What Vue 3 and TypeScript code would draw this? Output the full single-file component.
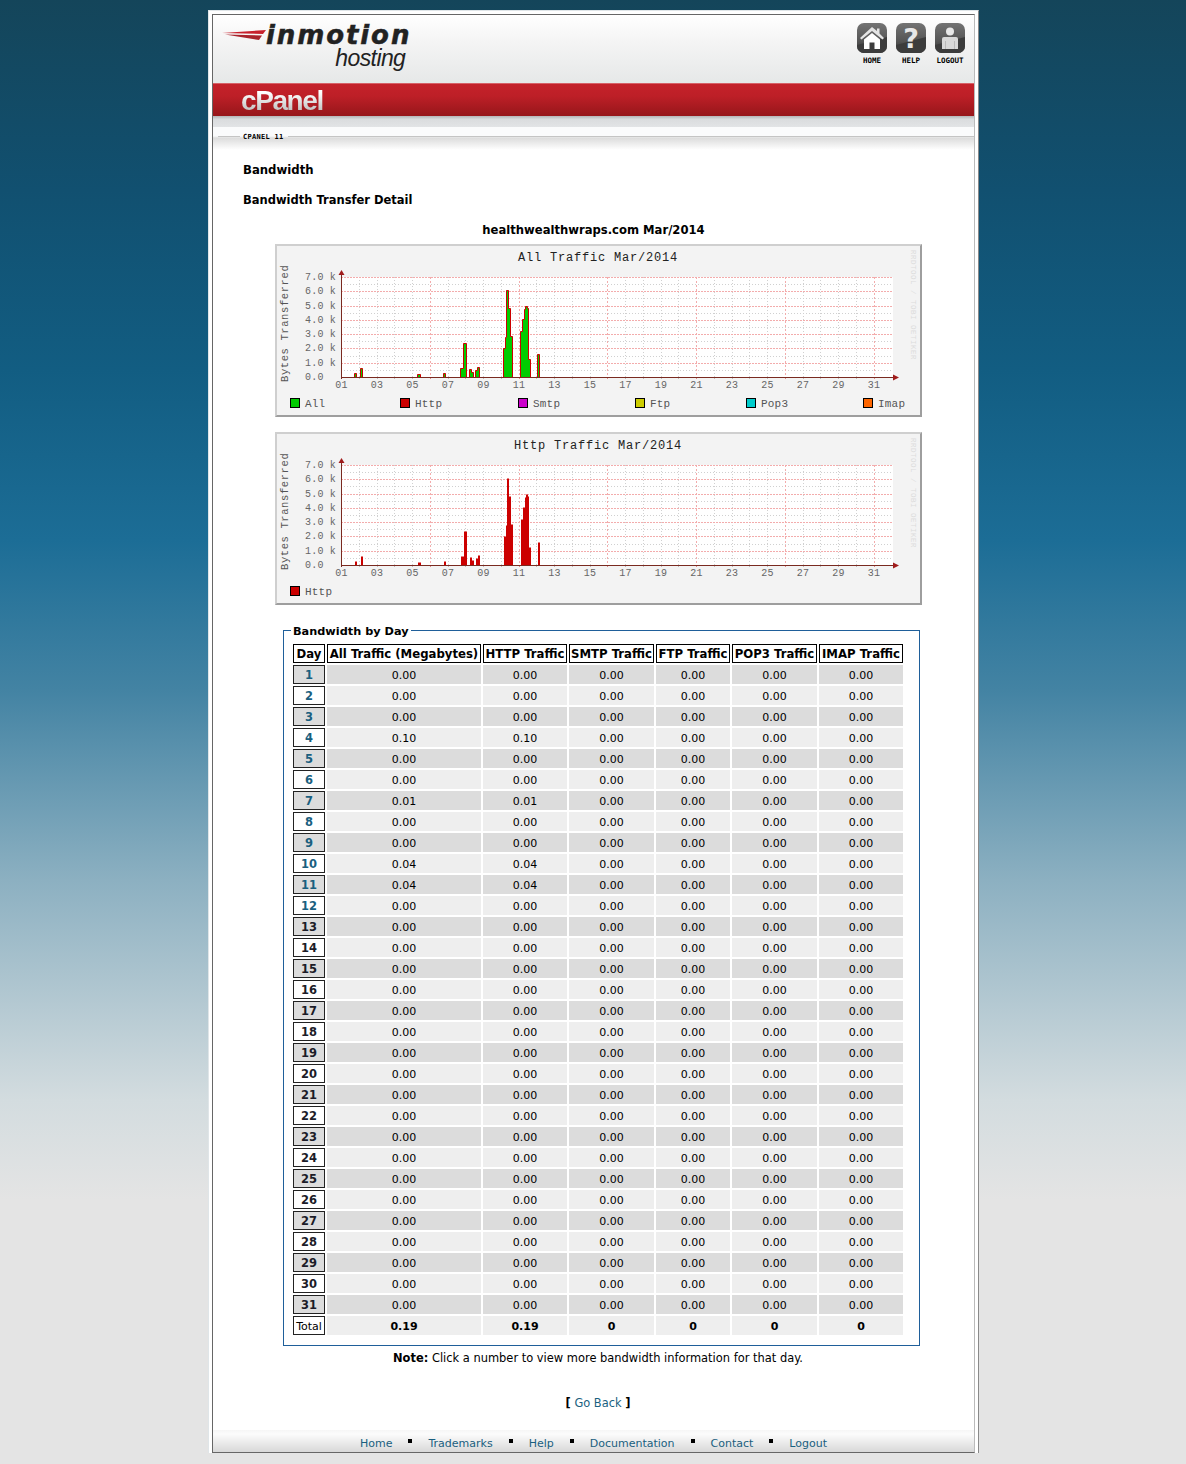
<script setup lang="ts">
interface Bar { x0: number; x1: number; h: number }

// stepped traffic samples read off the rrdtool graph, in plot pixels
const groups: Bar[][] = [
  [{ x0: 13, x1: 15, h: 4 }],
  [{ x0: 19, x1: 21, h: 9 }],
  [{ x0: 76, x1: 79, h: 3 }],
  [{ x0: 102, x1: 104, h: 4 }],
  [{ x0: 119, x1: 122, h: 9 }, { x0: 122, x1: 125, h: 34 }],
  [{ x0: 128, x1: 130, h: 8 }, { x0: 130, x1: 132, h: 5 }],
  [{ x0: 134, x1: 136, h: 7 }, { x0: 136, x1: 138, h: 10 }],
  [
    { x0: 162, x1: 164, h: 29 },
    { x0: 164, x1: 165, h: 40 },
    { x0: 165, x1: 167, h: 87 },
    { x0: 167, x1: 169, h: 69 },
    { x0: 169, x1: 171, h: 41 },
  ],
  [
    { x0: 179, x1: 181, h: 46 },
    { x0: 181, x1: 183, h: 58 },
    { x0: 183, x1: 184, h: 68 },
    { x0: 184, x1: 186, h: 71 },
    { x0: 186, x1: 187, h: 69 },
    { x0: 187, x1: 189, h: 18 },
  ],
  [{ x0: 196, x1: 198, h: 23 }],
]

const PLOT_X = 64
const DAY = 17.75

function stepPath(g: Bar[], base: number): string {
  const ox = PLOT_X + 0.5
  const by = base + 0.5
  let d = `M${ox + g[0].x0} ${by}`
  for (const b of g) {
    d += `L${ox + b.x0} ${by - b.h}L${ox + b.x1} ${by - b.h}`
  }
  d += `L${ox + g[g.length - 1].x1} ${by}Z`
  return d
}

const days = Array.from({ length: 31 }, (_, i) => i + 1)
const hGrid = Array.from({ length: 14 }, (_, i) => i + 1)
const yLabels = [0, 1, 2, 3, 4, 5, 6, 7]
const xLabels = days.filter((d) => d % 2 === 1)
const minorV = days.filter((d) => d % 5 !== 1)
const majorV = days.filter((d) => d % 5 === 1)
const minorH = hGrid.filter((i) => i % 2 === 1)
const majorH = hGrid.filter((i) => i % 2 === 0)

const vx = (d: number) => Math.round(PLOT_X + (d - 1) * DAY) + 0.5
const hy = (base: number, i: number) => Math.round(base - i * 7.15) + 0.5

const charts = [
  {
    title: 'All Traffic Mar/2014',
    base: 131,
    style: 'all',
    legend: [
      { name: 'All', x: 13, color: '#00cc00' },
      { name: 'Http', x: 123, color: '#cc0000' },
      { name: 'Smtp', x: 241, color: '#cc00cc' },
      { name: 'Ftp', x: 358, color: '#cccc00' },
      { name: 'Pop3', x: 469, color: '#00cccc' },
      { name: 'Imap', x: 586, color: '#ff6600' },
    ],
  },
  {
    title: 'Http Traffic Mar/2014',
    base: 131,
    style: 'http',
    legend: [{ name: 'Http', x: 13, color: '#cc0000' }],
  },
]

const specials: Record<number, string> = { 4: '0.10', 7: '0.01', 10: '0.04', 11: '0.04' }
const rows = days.map((d) => {
  const v = specials[d] ?? '0.00'
  return { day: d, all: v, http: v }
})

const columns = ['All Traffic (Megabytes)', 'HTTP Traffic', 'SMTP Traffic', 'FTP Traffic', 'POP3 Traffic', 'IMAP Traffic']
const footerLinks = ['Home', 'Trademarks', 'Help', 'Documentation', 'Contact', 'Logout']
</script>

<template>
  <div class="frame">
    <div class="inner">
      <header class="top">
        <div class="logo">
          <svg class="swoosh" width="46" height="16" viewBox="0 0 46 16">
            <polygon points="0,5 44,2 41,6" fill="#c8202c" />
            <polygon points="3,6.500 40,7.500 37,12" fill="#a8242c" />
          </svg>
          <div class="logo-words">
            <span class="logo-main">inmotion</span>
            <span class="logo-sub">hosting</span>
          </div>
        </div>
        <nav class="icons">
          <a class="icon">
            <svg width="30" height="30" viewBox="0 0 30 30">
              <defs>
                <linearGradient id="btn" x1="0" y1="0" x2="0" y2="1">
                  <stop offset="0" stop-color="#747474" />
                  <stop offset="0.6" stop-color="#555" />
                  <stop offset="1" stop-color="#333" />
                </linearGradient>
              </defs>
              <rect width="30" height="30" rx="7" fill="url(#btn)" />
              <path d="M30 14V23a7 7 0 0 1-7 7H7a7 7 0 0 1-7-7V22Z" fill="#3c3c3c" />
              <path d="M15 4L20 8V5.500h2.500V10.500L27 15l-1.500 1.500L15 8 4.500 16.500 3 15Z" fill="#e4e4e4" />
              <path d="M7 16.500L15 10l8 6.500V26H17.500V19.500h-5V26H7Z" fill="#fff" />
            </svg>
            <span>HOME</span>
          </a>
          <a class="icon">
            <svg width="30" height="30" viewBox="0 0 30 30">
              <rect width="30" height="30" rx="7" fill="url(#btn)" />
              <path d="M30 14V23a7 7 0 0 1-7 7H7a7 7 0 0 1-7-7V22Z" fill="#3c3c3c" />
              <text x="15" y="25" text-anchor="middle" class="qmark">?</text>
            </svg>
            <span>HELP</span>
          </a>
          <a class="icon">
            <svg width="30" height="30" viewBox="0 0 30 30">
              <rect width="30" height="30" rx="7" fill="url(#btn)" />
              <path d="M30 14V23a7 7 0 0 1-7 7H7a7 7 0 0 1-7-7V22Z" fill="#3c3c3c" />
              <circle cx="15" cy="8.500" r="4" fill="#e8e8e8" />
              <path d="M9 14h12a2 2 0 0 1 2 2V26H7V16a2 2 0 0 1 2-2Z" fill="#d8d8d8" />
              <path d="M10.500 18V26M19.500 18V26" stroke="#aaa" stroke-width="0.7" />
            </svg>
            <span>LOGOUT</span>
          </a>
        </nav>
      </header>

      <div class="brand"><span class="brand-text">cPanel</span></div>
      <div class="brand-shadow"></div>
      <div class="crumb"><span>CPANEL 11</span></div>

      <main class="content">
        <h1 class="title">Bandwidth</h1>
        <h2 class="subtitle">Bandwidth Transfer Detail</h2>
        <h3 class="domain">healthwealthwraps.com Mar/2014</h3>

        <div v-for="c in charts" :key="c.title" class="chart">
          <svg width="643" height="169" viewBox="0 0 643 169">
            <text x="321" y="15" text-anchor="middle" class="g-title">{{ c.title }}</text>
            <text transform="translate(11 136) rotate(-90)" class="g-axis-title">Bytes Transferred</text>
            <text transform="translate(634 4) rotate(90)" class="g-mark">RRDTOOL / TOBI OETIKER</text>

            <rect :x="PLOT_X" :y="c.base - 100" width="552" height="100" fill="#fff" />
            <g stroke="#d0d0d0" stroke-dasharray="1 2">
              <line v-for="i in minorH" :key="'h' + i" :x1="PLOT_X" :x2="PLOT_X + 552" :y1="hy(c.base, i)" :y2="hy(c.base, i)" />
              <line v-for="d in minorV" :key="'v' + d" :x1="vx(d)" :x2="vx(d)" :y1="c.base - 100" :y2="c.base" />
            </g>
            <g stroke="#f3acac">
              <line v-for="i in majorH" :key="'h' + i" stroke-dasharray="2 1" :x1="PLOT_X" :x2="PLOT_X + 552" :y1="hy(c.base, i)" :y2="hy(c.base, i)" />
              <line v-for="d in majorV" :key="'v' + d" stroke-dasharray="2 2" :x1="vx(d)" :x2="vx(d)" :y1="c.base - 100" :y2="c.base" />
            </g>
            <line v-for="d in days" :key="'t' + d" :x1="vx(d)" :x2="vx(d)" :y1="c.base" :y2="c.base + 2"
              :stroke="d % 5 === 1 ? '#d88' : '#bbb'" />

            <template v-for="(g, gi) in groups" :key="gi">
              <path v-if="c.style === 'all'" :d="stepPath(g, c.base)" fill="#00cc00" stroke="#cc0000" />
              <path v-else :d="stepPath(g, c.base)" fill="#cc0000" transform="translate(0.500 0)" />
            </template>

            <line :x1="PLOT_X" :x2="PLOT_X + 552" :y1="c.base + 0.5" :y2="c.base + 0.5" stroke="#7a2a20" />
            <line :x1="PLOT_X + 0.5" :x2="PLOT_X + 0.5" :y1="c.base - 104" :y2="c.base + 2" stroke="#7a2a20" />
            <polygon :points="`${PLOT_X + 0.500},${c.base - 107} ${PLOT_X + 3.500},${c.base - 102} ${PLOT_X - 2.500},${c.base - 102}`" fill="#a01c1c" />
            <polygon :points="`${PLOT_X + 558},${c.base + 0.500} ${PLOT_X + 552},${c.base - 2.500} ${PLOT_X + 552},${c.base + 3.500}`" fill="#a01c1c" />

            <text v-for="n in yLabels" :key="'y' + n" x="28" :y="c.base + 3 - n * 14.3" class="g-label">{{ n }}.0 {{ n === 0 ? ' ' : 'k' }}</text>
            <text v-for="d in xLabels" :key="'x' + d" :x="PLOT_X + 0.500 + (d - 1) * DAY" :y="c.base + 11" text-anchor="middle" class="g-label">{{ String(d).padStart(2, '0') }}</text>

            <template v-for="l in c.legend" :key="l.name">
              <rect :x="l.x + 0.5" y="152.500" width="9" height="9" :fill="l.color" stroke="#000" />
              <text :x="l.x + 15" y="161" class="g-legend">{{ l.name }}</text>
            </template>
          </svg>
        </div>

        <fieldset class="box">
          <legend>Bandwidth by Day</legend>
          <table class="data">
            <colgroup>
              <col class="c-day" /><col class="c-all" /><col class="c-std" /><col class="c-smtp" />
              <col class="c-ftp" /><col class="c-smtp" /><col class="c-std" />
            </colgroup>
            <thead>
              <tr>
                <th>Day</th>
                <th v-for="col in columns" :key="col">{{ col }}</th>
              </tr>
            </thead>
            <tbody>
              <tr v-for="r in rows" :key="r.day" :class="r.day % 2 ? 'odd' : 'even'">
                <td class="day" :class="{ visited: r.day > 12 }"><a>{{ r.day }}</a></td>
                <td>{{ r.all }}</td>
                <td>{{ r.http }}</td>
                <td>0.00</td>
                <td>0.00</td>
                <td>0.00</td>
                <td>0.00</td>
              </tr>
              <tr class="even total">
                <td class="day">Total</td>
                <td>0.19</td>
                <td>0.19</td>
                <td>0</td>
                <td>0</td>
                <td>0</td>
                <td>0</td>
              </tr>
            </tbody>
          </table>
        </fieldset>

        <p class="note"><b>Note:</b> Click a number to view more bandwidth information for that day.</p>
        <p class="back"><b>[</b> <a>Go Back</a> <b>]</b></p>
      </main>

      <footer class="foot">
        <template v-for="(l, i) in footerLinks" :key="l">
          <i v-if="i > 0" class="dot"></i>
          <a>{{ l }}</a>
        </template>
      </footer>
    </div>
  </div>
</template>

<style>
html, body {
  margin: 0;
}
body {
  min-height: 1464px;
  background: linear-gradient(180deg, #14455a 0, #115070 190px, #125d82 370px, #1c6d96 540px, #4383a3 690px, #8cb0c1 880px, #d3dcdf 1100px, #e4e4e4 1200px, #e4e4e4 100%);
}
</style>

<style scoped>
.frame {
  box-sizing: border-box;
  width: 771px;
  height: 1443px;
  margin: 10px 0 0 208px;
  padding: 3px 3px 0;
  background: #fff;
  border: 1px solid #dfe5e8;
  border-right-color: #8a8a8a;
  border-bottom: 0;
  font-family: "DejaVu Sans", Verdana, sans-serif;
  font-size: 11px;
  color: #000;
}
.inner {
  box-sizing: border-box;
  height: 1439px;
  border: 1px solid #666;
  border-right-color: #bbb;
  border-bottom-color: #666;
  display: flex;
  flex-direction: column;
  background: #fff;
}
.top {
  height: 68px;
  flex: none;
  display: flex;
  justify-content: space-between;
  background: linear-gradient(180deg, #fff 0, #f4f4f4 40%, #e6e8e8 100%);
}
.logo {
  display: flex;
  margin: 8px 0 0 9px;
  align-items: flex-start;
}
.swoosh {
  margin-top: 5px;
  margin-right: -2px;
}
.logo-words {
  display: flex;
  flex-direction: column;
  align-items: flex-end;
}
.logo-main {
  font-family: "DejaVu Sans", sans-serif;
  font-weight: 700;
  font-style: italic;
  font-size: 26px;
  line-height: 25px;
  letter-spacing: 1.9px;
  -webkit-text-stroke: 0.5px #222;
  color: #222;
}
.logo-sub {
  font-family: "Liberation Sans", sans-serif;
  font-style: italic;
  font-size: 23px;
  line-height: 21px;
  letter-spacing: -0.6px;
  color: #222;
  margin-right: 6px;
}
.icons {
  display: flex;
  gap: 9px;
  margin: 8px 9px 0 0;
}
.icon {
  display: flex;
  flex-direction: column;
  align-items: center;
  width: 30px;
  font-family: "DejaVu Sans Mono", monospace;
  font-weight: 700;
  font-size: 7.500px;
  line-height: 8px;
  color: #000;
}
.icon span {
  margin-top: 4px;
  white-space: nowrap;
}
.qmark {
  font-family: "DejaVu Sans", sans-serif;
  font-weight: 700;
  font-size: 27px;
  fill: #e8e8e8;
}
.brand {
  height: 33px;
  flex: none;
  box-sizing: border-box;
  padding: 2px 0 0 28px;
  background: linear-gradient(180deg, #e9a0a3 0, #c4212a 1px, #bd1f27 40%, #96161a 100%);
  display: flex;
  align-items: center;
}
.brand-text {
  font-family: "Liberation Sans", sans-serif;
  font-weight: 700;
  font-size: 28px;
  letter-spacing: -1.4px;
  line-height: 31px;
  background: linear-gradient(180deg, #fff 25%, #c4c4c4 80%);
  -webkit-background-clip: text;
  background-clip: text;
  color: transparent;
}
.brand-shadow {
  height: 11px;
  flex: none;
  background: linear-gradient(180deg, #b4b6b8 0, #dadcde 30%, #e2e4e6 100%);
}
.crumb {
  height: 23px;
  flex: none;
  box-sizing: border-box;
  position: relative;
  background: linear-gradient(180deg, #fafbfc 0, #fafbfc 9px, #dcdcdc 11px, #fff 100%);
  font-family: "DejaVu Sans Mono", monospace;
  font-weight: 700;
  font-size: 7px;
  letter-spacing: 0.3px;
}
.crumb::before {
  content: "";
  position: absolute;
  left: 5px;
  right: 0;
  top: 9px;
  border-top: 1px solid #c4c4c4;
}
.crumb span {
  position: absolute;
  left: 27px;
  top: 6px;
  padding: 0 4px 0 3px;
  line-height: 9px;
  background: linear-gradient(180deg, #fafbfc 0, #fafbfc 3px, #dcdcdc 5px, #e6e6e6 100%);
}
.content {
  flex: 1;
  padding: 10px 0 0;
  display: flex;
  flex-direction: column;
}
.title {
  margin: 0 0 0 30px;
  font-size: 11.700px;
  line-height: 20px;
  font-weight: 700;
}
.subtitle {
  margin: 10px 0 0 30px;
  font-size: 11.500px;
  line-height: 20px;
  font-weight: 700;
}
.domain {
  margin: 10px 0 4px;
  font-size: 11.600px;
  line-height: 20px;
  font-weight: 700;
  text-align: center;
}
.chart {
  box-sizing: border-box;
  width: 647px;
  height: 173px;
  margin: 0 0 15px 62px;
  background: #f3f3f3;
  border: 2px solid #cfcfcf;
  border-right-color: #9e9e9e;
  border-bottom-color: #9e9e9e;
}
.chart svg {
  display: block;
}
.g-title {
  font-family: "Liberation Mono", monospace;
  font-size: 12px;
  letter-spacing: 0.8px;
  fill: #222;
}
.g-axis-title {
  font-family: "Liberation Mono", monospace;
  font-size: 10.500px;
  letter-spacing: 0.6px;
  fill: #555;
}
.g-mark {
  font-family: "Liberation Mono", monospace;
  font-size: 7.500px;
  letter-spacing: 0.5px;
  fill: #dcdcdc;
}
.g-label {
  font-family: "Liberation Mono", monospace;
  font-size: 10px;
  letter-spacing: 0.2px;
  fill: #666;
}
.g-legend {
  font-family: "Liberation Mono", monospace;
  font-size: 11px;
  letter-spacing: 0.2px;
  fill: #555;
}
.box {
  box-sizing: border-box;
  width: 637px;
  height: 724px;
  margin: 2px 0 0 70px;
  padding: 4px 9px 0;
  border: 1px solid #1f5f9a;
  min-width: 0;
}
.box legend {
  position: relative;
  top: 2px;
  padding: 0 2px;
  margin-left: -2px;
  font-weight: 700;
  font-size: 11.300px;
  line-height: 16px;
}
.data {
  border-collapse: separate;
  border-spacing: 2px;
  table-layout: fixed;
  width: 614px;
  margin-left: -2px;
  text-align: center;
}
.c-day { width: 32px; }
.c-all { width: 154px; }
.c-std { width: 84px; }
.c-smtp { width: 85px; }
.c-ftp { width: 74px; }
.data th {
  box-sizing: border-box;
  height: 19px;
  padding: 1px 0 0;
  border: 1px solid #000;
  font-size: 11.700px;
  font-weight: 700;
  white-space: nowrap;
  background: #fff;
}
.data td {
  box-sizing: border-box;
  height: 19px;
  padding: 1px 0 0;
  font-size: 11px;
}
.odd td {
  background: #dcdcdc;
}
.even td {
  background: #eeeeee;
}
.data td.day {
  border: 1px solid #222;
  font-size: 11.500px;
  font-weight: 700;
  color: #1a5f7f;
}
.data td.day.visited {
  color: #1c1c28;
}
.even td.day {
  background: #fff;
}
.total td {
  font-weight: 700;
}
.data .total td.day {
  font-size: 11px;
  font-weight: 400;
  color: #000;
}
.note {
  margin: 2px 0 0 9px;
  font-size: 11.450px;
  line-height: 20px;
  text-align: center;
}
.back {
  margin: 25px 0 0 9px;
  font-size: 11.400px;
  line-height: 20px;
  text-align: center;
}
.back a, .foot a {
  color: #1a5f7f;
}
.foot {
  height: 22px;
  flex: none;
  box-sizing: border-box;
  padding-top: 6px;
  display: flex;
  justify-content: center;
  gap: 16px;
  font-size: 11px;
  line-height: 16px;
  background: linear-gradient(180deg, #f6f6f6 0, #fcfcfc 4px, #d8d8d8 100%);
}
.dot {
  width: 4px;
  height: 4px;
  margin-top: 3px;
  background: #000;
}
</style>
